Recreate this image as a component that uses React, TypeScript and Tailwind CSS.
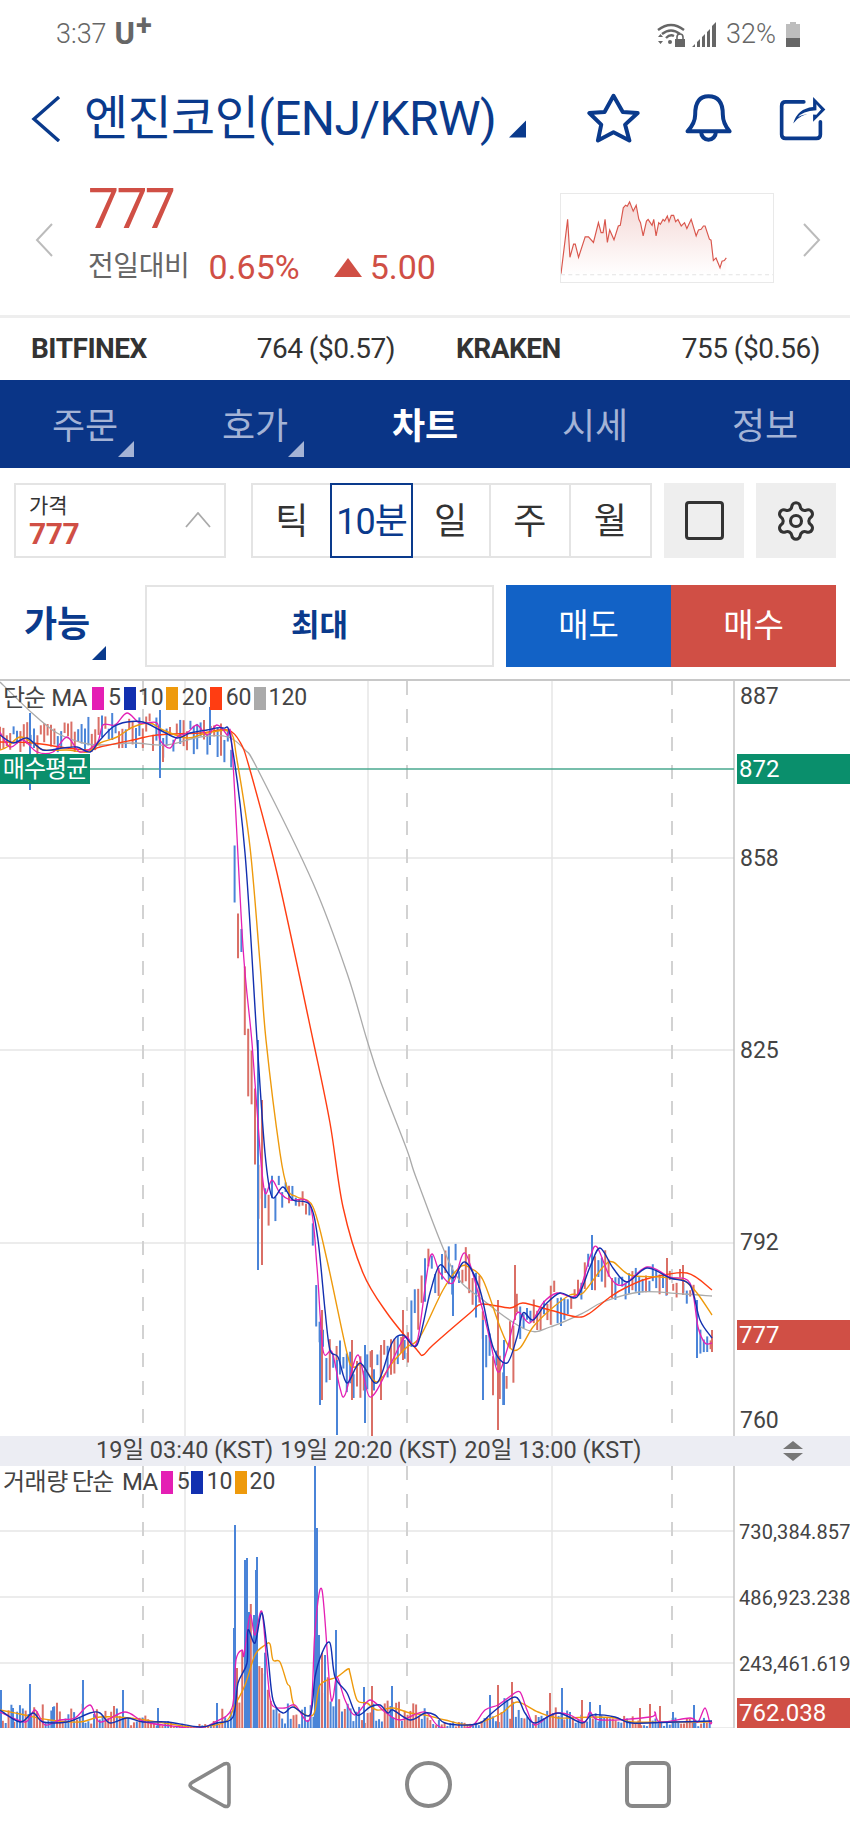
import React from "react";
import { Settings } from "lucide-react";

type P = [number, number];
const NAVY = "#0a3a8c";

function smooth(pts: P[]): string {
  let d = `M${pts[0][0]},${pts[0][1]}`;
  for (let i = 0; i < pts.length - 1; i++) {
    const p0 = pts[Math.max(0, i - 1)];
    const p1 = pts[i];
    const p2 = pts[i + 1];
    const p3 = pts[Math.min(pts.length - 1, i + 2)];
    const k = 0.16;
    d += ` C${(p1[0] + (p2[0] - p0[0]) * k).toFixed(1)},${(p1[1] + (p2[1] - p0[1]) * k).toFixed(1)} ${(p2[0] - (p3[0] - p1[0]) * k).toFixed(1)},${(p2[1] - (p3[1] - p1[1]) * k).toFixed(1)} ${p2[0]},${p2[1]}`;
  }
  return d;
}

function rng(seed: number) {
  let s = seed;
  return () => {
    s = (s * 1664525 + 1013904223) % 4294967296;
    return s / 4294967296;
  };
}

function lerp(t: number[][], x: number, c: number) {
  for (let i = 0; i < t.length - 1; i++) {
    if (x >= t[i][0] && x <= t[i + 1][0]) {
      const f = (x - t[i][0]) / (t[i + 1][0] - t[i][0] || 1);
      return t[i][c] + (t[i + 1][c] - t[i][c]) * f;
    }
  }
  return t[t.length - 1][c];
}

const MA120: P[] = [[0,682],[32,713],[57,733],[83,743],[100,745],[133,743],[167,745],[200,737],[228,737],[245,750],[257,768],[313,883],[347,973],[367,1040],[380,1080],[407,1150],[417,1180],[453,1270],[483,1300],[527,1330],[550,1327],[583,1313],[603,1302],[640,1292],[683,1294],[712,1296]];
const MA60: P[] = [[0,742],[33,743],[67,748],[90,750],[100,747],[133,740],[157,735],[200,733],[227,730],[240,742],[250,770],[277,873],[313,1040],[330,1123],[343,1207],[363,1273],[387,1313],[417,1350],[423,1355],[433,1345],[470,1313],[482,1304],[510,1308],[523,1303],[550,1310],[577,1317],[590,1313],[610,1297],[627,1287],[650,1278],[687,1273],[712,1290]];
const MA20: P[] = [[0,750],[7,747],[20,737],[33,743],[43,750],[67,750],[87,752],[100,743],[117,737],[133,727],[150,723],[163,730],[187,738],[207,733],[230,732],[237,760],[250,847],[260,963],[266,1040],[280,1153],[288,1190],[297,1197],[313,1207],[327,1260],[347,1353],[353,1367],[362,1365],[377,1382],[393,1362],[407,1347],[420,1337],[443,1290],[460,1267],[470,1268],[483,1280],[500,1327],[510,1348],[520,1348],[533,1327],[550,1310],[570,1295],[583,1293],[603,1267],[613,1262],[630,1275],[660,1277],[683,1280],[697,1293],[712,1315]];
const MA10: P[] = [[0,735],[13,743],[27,738],[43,750],[63,748],[77,747],[90,752],[100,740],[113,727],[127,722],[143,722],[160,730],[177,738],[190,733],[207,730],[223,728],[231,740],[245,853],[257,1040],[265,1153],[272,1197],[283,1187],[293,1200],[310,1205],[318,1240],[325,1310],[330,1350],[338,1357],[347,1383],[360,1363],[377,1383],[392,1343],[403,1335],[417,1345],[430,1293],[440,1265],[453,1278],[465,1262],[480,1290],[493,1347],[507,1363],[517,1337],[523,1313],[533,1320],[545,1305],[560,1293],[577,1297],[590,1267],[600,1248],[613,1268],[627,1282],[647,1268],[670,1278],[690,1285],[700,1320],[712,1338]];
const MA5: P[] = [[0,732],[10,747],[23,740],[37,752],[53,752],[67,737],[80,752],[97,743],[103,725],[115,725],[127,713],[140,723],[157,723],[160,740],[170,748],[177,737],[187,733],[197,725],[207,735],[217,725],[227,735],[232,747],[243,947],[252,1043],[260,1150],[265,1193],[272,1180],[280,1193],[290,1200],[310,1205],[317,1267],[323,1350],[332,1352],[340,1388],[345,1395],[358,1355],[370,1397],[390,1365],[405,1337],[417,1342],[430,1257],[440,1273],[453,1283],[465,1253],[480,1300],[490,1340],[498,1372],[507,1350],[517,1313],[530,1323],[543,1303],[557,1293],[577,1295],[590,1257],[597,1247],[610,1277],[623,1285],[647,1267],[670,1277],[690,1283],[698,1327],[705,1343],[712,1343]];

const ENV = [[0,722,755],[30,722,755],[60,722,752],[90,716,752],[120,710,748],[150,713,748],[160,716,758],[190,720,755],[215,716,755],[232,725,768],[234,800,880],[236,860,955],[242,880,965],[246,1000,1095],[252,1020,1105],[256,1090,1205],[260,1150,1228],[265,1165,1228],[280,1175,1218],[295,1188,1212],[312,1192,1216],[314,1230,1310],[318,1310,1388],[330,1328,1380],[345,1342,1398],[360,1342,1398],[375,1342,1390],[390,1308,1375],[405,1318,1370],[415,1282,1345],[425,1235,1305],[440,1248,1295],[455,1238,1295],[470,1243,1295],[482,1272,1340],[492,1328,1405],[505,1358,1405],[513,1298,1385],[520,1288,1345],[535,1292,1330],[555,1278,1330],[570,1288,1320],[590,1248,1295],[605,1243,1295],[620,1278,1302],[635,1263,1295],[660,1263,1295],[680,1268,1298],[692,1278,1308],[698,1300,1355],[704,1325,1352],[712,1325,1352]];
const BLUE = "#4a84d8";
const RED = "#da6f66";
const OUT: [number, number, number, string][] = [[30,713,790,BLUE],[160,710,778,BLUE],[163,745,762,RED],[210,707,745,BLUE],[258,1040,1270,BLUE],[262,1100,1265,RED],[320,1330,1405,BLUE],[322,1310,1400,RED],[337,1360,1435,BLUE],[352,1340,1400,RED],[365,1345,1423,BLUE],[372,1350,1436,RED],[381,1345,1400,RED],[403,1310,1360,RED],[453,1270,1316,BLUE],[498,1300,1430,RED],[504,1340,1405,BLUE],[483,1320,1400,BLUE],[515,1265,1320,RED],[592,1235,1290,BLUE],[667,1258,1295,RED],[683,1265,1295,RED],[697,1300,1358,BLUE],[712,1330,1352,RED]];

const candleBars = (() => {
  const r = rng(17);
  const out: [number, number, number, string][] = [];
  for (let x = 0; x <= 712; x += 3.4) {
    const t = lerp(ENV, x, 1);
    const b = lerp(ENV, x, 2);
    const h = b - t;
    const a = t + r() * h * 0.6;
    const c = Math.min(b, a + h * (0.2 + r() * 0.6));
    out.push([x, a, c, r() > 0.52 ? BLUE : RED]);
  }
  return out.concat(OUT);
})();

const VENV = [[0,28],[100,28],[140,14],[180,5],[205,5],[220,15],[232,40],[236,100],[250,130],[262,100],[270,60],[280,30],[300,25],[312,30],[316,100],[325,80],[335,80],[345,45],[355,30],[380,30],[420,25],[440,8],[470,5],[485,25],[500,35],[515,30],[530,15],[560,25],[580,15],[600,15],[640,12],[712,10]];
const VOUT: [number, number, string][] = [[1,1690,BLUE],[13,1708,BLUE],[30,1684,BLUE],[53,1707,BLUE],[83,1680,BLUE],[123,1690,BLUE],[114,1706,RED],[158,1708,BLUE],[217,1703,BLUE],[234,1628,BLUE],[235,1525,BLUE],[237,1668,RED],[245,1560,BLUE],[247,1558,BLUE],[249,1612,BLUE],[256,1570,BLUE],[257,1557,BLUE],[254,1615,BLUE],[262,1668,RED],[315,1465,BLUE],[317,1528,BLUE],[319,1635,BLUE],[322,1653,RED],[325,1655,BLUE],[336,1630,BLUE],[364,1687,BLUE],[372,1686,RED],[392,1686,BLUE],[490,1695,BLUE],[498,1685,RED],[512,1682,RED],[550,1693,RED],[562,1688,BLUE],[582,1700,RED],[590,1702,BLUE],[600,1705,BLUE],[650,1704,RED],[640,1708,RED],[660,1706,RED],[673,1712,BLUE],[694,1705,BLUE]];
const volBars = (() => {
  const r = rng(91);
  const out: [number, number, string][] = [];
  for (let x = 0; x <= 712; x += 2.85) {
    out.push([x, 1728 - lerp(VENV, x, 1) * (0.15 + r() * 0.85), r() > 0.5 ? BLUE : RED]);
  }
  return out.concat(VOUT);
})();

const VO: P[] = [[0,1710],[20,1714],[50,1720],[80,1722],[100,1717],[130,1718],[170,1724],[195,1727],[225,1722],[235,1705],[245,1685],[255,1655],[265,1645],[270,1644],[273,1660],[280,1662],[287,1683],[290,1687],[295,1707],[313,1715],[320,1685],[337,1677],[348,1669],[350,1673],[357,1700],[367,1703],[377,1710],[393,1708],[410,1713],[425,1715],[445,1720],[468,1725],[482,1722],[502,1713],[517,1702],[538,1712],[558,1718],[592,1717],[615,1718],[632,1722],[675,1722],[712,1722]];
const VN: P[] = [[0,1710],[20,1722],[33,1713],[43,1722],[67,1722],[90,1713],[100,1713],[110,1723],[127,1718],[143,1722],[167,1722],[200,1727],[217,1723],[233,1717],[238,1683],[247,1663],[248,1630],[255,1643],[262,1613],[268,1657],[273,1700],[283,1713],[293,1707],[310,1715],[315,1677],[322,1653],[330,1643],[335,1677],[347,1693],[357,1715],[370,1707],[380,1705],[388,1713],[393,1710],[410,1720],[425,1713],[435,1715],[445,1723],[468,1725],[482,1722],[492,1713],[515,1697],[525,1713],[535,1723],[558,1713],[582,1723],[592,1715],[615,1717],[632,1723],[675,1722],[712,1721]];
const VM: P[] = [[0,1712],[25,1722],[35,1710],[45,1725],[60,1720],[75,1718],[90,1705],[100,1722],[125,1712],[145,1722],[180,1727],[200,1728],[215,1722],[232,1708],[236,1660],[242,1650],[244,1655],[250,1615],[255,1635],[262,1612],[268,1680],[272,1705],[285,1708],[295,1705],[310,1718],[315,1630],[322,1590],[330,1690],[333,1698],[337,1677],[345,1700],[355,1715],[370,1700],[385,1712],[400,1720],[425,1712],[440,1727],[470,1727],[485,1710],[498,1705],[512,1695],[520,1692],[527,1710],[535,1725],[550,1715],[560,1713],[570,1715],[585,1722],[590,1712],[600,1720],[650,1717],[655,1712],[660,1722],[690,1718],[698,1722],[705,1708],[710,1723],[712,1722]];

const MINI: P[] = [[57,255],[77,90],[84,205],[95,165],[100,165],[110,205],[130,143],[140,143],[155,160],[170,100],[178,130],[184,130],[190,90],[197,160],[204,122],[217,152],[230,110],[236,108],[245,55],[252,47],[257,50],[264,37],[275,65],[284,47],[292,90],[297,100],[305,140],[315,95],[320,90],[332,108],[337,90],[344,140],[352,100],[357,105],[365,90],[370,95],[378,80],[383,97],[390,78],[397,78],[403,97],[410,90],[420,110],[430,100],[437,118],[450,90],[465,140],[472,122],[480,120],[487,110],[492,110],[505,150],[510,153],[517,215],[525,207],[537,237],[543,217],[550,215],[556,207]];

function Corner({ className }: { className: string }) {
  return (
    <svg viewBox="0 0 16 16" className={className}>
      <path d="M16 0V16H0Z" fill="currentColor" />
    </svg>
  );
}

function Swatch({ className }: { className: string }) {
  return <span className={`block w-[12px] h-[23px] ${className}`} />;
}

function Grid({ y0, y1, ys }: { y0: number; y1: number; ys: number[] }) {
  return (
    <g>
      {ys.map((y) => (
        <line key={y} x1={0} x2={734} y1={y} y2={y} stroke="#e6e6e6" strokeWidth={1.5} />
      ))}
      {[185, 368, 552].map((x) => (
        <line key={x} x1={x} x2={x} y1={y0} y2={y1} stroke="#e6e6e6" strokeWidth={1.5} />
      ))}
      {[143, 407, 672].map((x) => (
        <line key={x} x1={x} x2={x} y1={y0} y2={y1} stroke="#d2d2d2" strokeWidth={2} strokeDasharray="14 14" />
      ))}
    </g>
  );
}

function AxisLabel({ y, children }: { y: number; children: React.ReactNode }) {
  return (
    <span style={{ top: y - 681 - 14 }} className="absolute left-[740px] h-[30px] leading-[30px] text-[23px] text-[#444]">
      {children}
    </span>
  );
}

function VolLabel({ y, children }: { y: number; children: React.ReactNode }) {
  return (
    <span style={{ top: y - 1466 - 14 }} className="absolute left-[739px] h-[30px] leading-[30px] text-[20px] tracking-[0.1px] text-[#444]">
      {children}
    </span>
  );
}

export default function App() {
  return (
    <div className="w-[850px] h-[1842px] bg-white overflow-hidden flex flex-col font-[Roboto,'Noto_Sans_CJK_KR',sans-serif]">
      {/* status bar */}
      <div className="h-[66px] flex items-center justify-between pl-[56px] pr-[50px] pt-[2px] text-[#666]">
        <div className="flex items-start">
          <span className="text-[27px] leading-[30px] font-light">3:37</span>
          <span className="text-[31px] leading-[30px] font-bold ml-[8px]">U</span>
          <span className="text-[29px] leading-[20px] font-bold ml-[1px] -mt-[4px]">+</span>
        </div>
        <div className="flex items-center">
          <svg viewBox="0 0 30 25" className="w-[30px] h-[25px]">
            <path d="M2 8Q15 -2 28 8M6 12Q15 5 24 12M10 16Q14 12 18 14" fill="none" stroke="#666" strokeWidth="2.4" />
            <circle cx="14" cy="20" r="2" fill="#666" />
            <path d="M2 15l2.500-3 2.500 3zM2 19h5l-2.500 3z" fill="#666" />
            <rect x="19" y="17" width="10" height="8" fill="#666" />
            <path d="M21 17v-2a3 3 0 016 0v2" fill="none" stroke="#666" strokeWidth="1.600" />
          </svg>
          <svg viewBox="0 0 26 25" className="w-[26px] h-[25px] ml-[6px]">
            <path d="M0 25h3v-3l-3 3zM5 25h3v-8l-3 3zM10 25h3v-13l-3 3zM15 25h3v-18l-3 3zM20 25h4V0l-4 4z" fill="#666" />
          </svg>
          <span className="text-[27px] leading-[30px] font-light ml-[8px]">32%</span>
          <svg viewBox="0 0 14 25" className="w-[14px] h-[25px] ml-[10px]">
            <path d="M4 0h6v2h4v23H0V2h4z" fill="#bdbdbd" />
            <rect x="0" y="16" width="14" height="9" fill="#666" />
          </svg>
        </div>
      </div>

      {/* title */}
      <div className="h-[94px] flex items-start pl-[31px] pt-[29px]">
        <svg viewBox="0 0 30 46" className="w-[30px] h-[46px] mt-[1px]">
          <path d="M28 1L3 23L28 45" fill="none" stroke={NAVY} strokeWidth="3.400" />
        </svg>
        <span className="ml-[23px] text-[48px] leading-[48px] text-[#0a3a8c] tracking-[-0.6px] whitespace-nowrap">엔진코인(ENJ/KRW)</span>
        <Corner className="w-[17px] h-[18px] ml-[13px] mt-[25px] text-[#0a3a8c]" />
        <svg viewBox="50 40 160 150" className="w-[53px] h-[50px] ml-[61px] -mt-[2px]">
          <path d="M130 48L158 97L203 100L165 135L178 183L130 158L83 183L93 135L57 100L103 97Z" fill="none" stroke={NAVY} strokeWidth="12" strokeLinejoin="round" />
        </svg>
        <svg viewBox="345 40 140 150" className="w-[47px] h-[50px] ml-[45px] -mt-[2px]">
          <path d="M352 155Q375 130 375 105Q375 50 415 50Q458 50 458 105Q458 130 478 155Z" fill="none" stroke={NAVY} strokeWidth="12" strokeLinejoin="round" />
          <path d="M393 158A22 22 0 0 0 437 158" fill="none" stroke={NAVY} strokeWidth="12" />
        </svg>
        <svg viewBox="625 42 145 140" className="w-[48px] h-[47px] ml-[47px] -mt-[1px]">
          <path d="M700 65H645Q633 65 633 77V163Q633 175 645 175H738Q750 175 750 163V125" fill="none" stroke={NAVY} strokeWidth="11" strokeLinecap="round" />
          <path d="M668 130Q680 85 728 80V50L765 88L728 125V100Q690 100 668 130Z" fill={NAVY} />
          <path d="M682 112Q695 92 738 90V72L752 88L738 104Q700 98 682 112Z" fill="#fff" />
        </svg>
      </div>

      {/* price */}
      <div className="h-[155px] flex items-start pl-[35px]">
        <svg viewBox="0 0 18 34" className="w-[18px] h-[34px] mt-[63px]">
          <path d="M17 1L2 17L17 33" fill="none" stroke="#bbbbbb" strokeWidth="2" />
        </svg>
        <div className="ml-[35px] flex flex-col w-[300px]">
          <span className="text-[55px] leading-[60px] text-[#d04f45] mt-[19px] tracking-[-2.5px]">777</span>
          <div className="flex items-center mt-[8px] whitespace-nowrap">
            <span className="text-[28px] leading-[40px] text-[#666] tracking-[-0.4px]">전일대비</span>
            <span className="text-[34px] leading-[40px] text-[#d04f45] ml-[19px]">0.65%</span>
            <span className="block w-0 h-0 ml-[34px] border-x-[14px] border-x-transparent border-b-[19px] border-b-[#d04f45]" />
            <span className="text-[34px] leading-[40px] text-[#d04f45] ml-[8px]">5.00</span>
          </div>
        </div>
        <div className="ml-[172px] mt-[33px] w-[214px] h-[90px] border border-[#e9e9e9]">
          <svg viewBox="57 13 640 267" preserveAspectRatio="none" className="w-full h-full block">
            <defs>
              <linearGradient id="mini" x1="0" y1="0" x2="0" y2="1">
                <stop offset="0" stopColor="#d04f45" stopOpacity="0.22" />
                <stop offset="1" stopColor="#d04f45" stopOpacity="0" />
              </linearGradient>
            </defs>
            <polygon points={`57,258 ${MINI.map((p) => p.join(",")).join(" ")} 556,258`} fill="url(#mini)" />
            <polyline points={MINI.map((p) => p.join(",")).join(" ")} fill="none" stroke="#d9564c" strokeWidth="3.500" />
            <line x1="57" x2="697" y1="258" y2="258" stroke="#dddddd" strokeWidth="2.500" strokeDasharray="12 10" />
          </svg>
        </div>
        <svg viewBox="0 0 18 34" className="w-[18px] h-[34px] mt-[63px] ml-[29px]">
          <path d="M1 1L16 17L1 33" fill="none" stroke="#bbbbbb" strokeWidth="2" />
        </svg>
      </div>

      {/* exchange */}
      <div className="h-[65px] border-t-[3px] border-[#eeeeee] flex items-center pl-[31px] pr-[30px] text-[28px] text-[#333] tracking-[-0.5px] whitespace-nowrap">
        <div className="w-[364px] flex justify-between">
          <span className="font-bold">BITFINEX</span>
          <span>764 ($0.57)</span>
        </div>
        <div className="w-[364px] ml-[61px] flex justify-between">
          <span className="font-bold">KRAKEN</span>
          <span>755 ($0.56)</span>
        </div>
      </div>

      {/* tabs */}
      <div className="h-[88px] bg-[#0a3587] grid grid-cols-5 text-[36px] text-[#a4b3d6]">
        {["주문", "호가", "차트", "시세", "정보"].map((t, i) => (
          <div key={t} className="relative flex items-center justify-center pt-[5px]">
            <span className={i === 2 ? "font-bold text-white" : ""}>{t}</span>
            {i < 2 && <Corner className="absolute left-[118px] top-[61px] w-[16px] h-[16px] text-[#a4b3d6]" />}
          </div>
        ))}
      </div>

      {/* controls */}
      <div className="flex pl-[14px] pr-[14px] pt-[15px] h-[90px]">
        <div className="w-[212px] h-[75px] border-2 border-[#e4e4e4] flex items-center justify-between pl-[13px] pr-[13px]">
          <div className="flex flex-col">
            <span className="text-[21px] leading-[26px] text-[#333]">가격</span>
            <span className="text-[30px] leading-[30px] font-bold text-[#d04f45] tracking-[-0.5px]">777</span>
          </div>
          <svg viewBox="0 0 26 16" className="w-[26px] h-[16px] mb-[2px]">
            <path d="M1 15L13 1L25 15" fill="none" stroke="#aaaaaa" strokeWidth="1.800" />
          </svg>
        </div>
        <div className="ml-[25px] w-[401px] h-[75px] grid grid-cols-5 border-2 border-[#e4e4e4] text-[36px] text-[#333]">
          <div className="flex items-center justify-center pt-[3px] border-r-2 border-[#e4e4e4]">틱</div>
          <div className="flex items-center justify-center pt-[3px] -my-[2px] -ml-[2px] -mr-[1px] border-2 border-[#0a3a8c] text-[#0a3a8c] tracking-[-1px] whitespace-nowrap">10분</div>
          <div className="flex items-center justify-center pt-[3px] border-r-2 border-[#e4e4e4]">일</div>
          <div className="flex items-center justify-center pt-[3px] border-r-2 border-[#e4e4e4]">주</div>
          <div className="flex items-center justify-center pt-[3px]">월</div>
        </div>
        <div className="ml-[12px] w-[80px] h-[75px] bg-[#eeeeee] flex items-center justify-center">
          <span className="block w-[39px] h-[39px] border-[3px] border-[#333] rounded-[4px]" />
        </div>
        <div className="ml-[12px] w-[80px] h-[75px] bg-[#eeeeee] flex items-center justify-center">
          <Settings size={44} strokeWidth={1.7} color="#333" />
        </div>
      </div>
      <div className="flex items-start pl-[14px] pr-[14px] pt-[27px] h-[121px]">
        <div className="relative w-[131px] h-[82px]">
          <span className="absolute left-[10px] top-[18px] text-[36px] leading-[44px] font-semibold text-[#0a3a8c]">가능</span>
          <Corner className="absolute left-[78px] bottom-[7px] w-[14px] h-[14px] text-[#0a3a8c]" />
        </div>
        <div className="w-[349px] h-[82px] border-2 border-[#e4e4e4] flex items-center justify-center text-[31px] font-bold text-[#0a3a8c]">최대</div>
        <div className="ml-[12px] w-[165px] h-[82px] bg-[#1262c6] flex items-center justify-center text-[33px] text-white">매도</div>
        <div className="w-[165px] h-[82px] bg-[#d04f45] flex items-center justify-center text-[33px] text-white">매수</div>
      </div>

      {/* price chart */}
      <div className="relative h-[757px] border-t-2 border-[#c8c8c8] shrink-0">
        <svg viewBox="0 681 850 755" className="absolute inset-0 w-[850px] h-[755px]">
          <Grid y0={681} y1={1436} ys={[858, 1050, 1243]} />
          <line x1={734} x2={734} y1={681} y2={1436} stroke="#c4c4c4" strokeWidth={1.5} />
          <line x1={0} x2={734} y1={769} y2={769} stroke="#4aa88f" strokeWidth={1.5} />
          {candleBars.map((b, i) => (
            <line key={i} x1={b[0]} x2={b[0]} y1={b[1]} y2={b[2]} stroke={b[3]} strokeWidth={2} />
          ))}
          <path d={smooth(MA120)} fill="none" stroke="#aaaaaa" strokeWidth={1.300} />
          <path d={smooth(MA60)} fill="none" stroke="#ff3d12" strokeWidth={1.400} />
          <path d={smooth(MA20)} fill="none" stroke="#ee9a0c" strokeWidth={1.400} />
          <path d={smooth(MA5)} fill="none" stroke="#e41fb4" strokeWidth={1.300} />
          <path d={smooth(MA10)} fill="none" stroke="#1230b0" strokeWidth={1.400} />
        </svg>
        <div className="absolute left-[3px] top-[5px] flex items-center h-[24px] text-[23px] text-[#444] whitespace-nowrap">
          <span className="text-[24px] tracking-[-1px]">단순</span>
          <span className="text-[24px] ml-[6px] tracking-[-0.5px]">MA</span>
          <Swatch className="ml-[5px] bg-[#e41fb4]" />
          <span className="ml-[4px]">5</span>
          <Swatch className="ml-[3px] bg-[#1230b0]" />
          <span className="ml-[2px]">10</span>
          <Swatch className="ml-[2px] bg-[#ee9a0c]" />
          <span className="ml-[4px]">20</span>
          <Swatch className="ml-[2px] bg-[#ff3d12]" />
          <span className="ml-[4px]">60</span>
          <Swatch className="ml-[2px] bg-[#aaaaaa]" />
          <span className="ml-[3px]">120</span>
        </div>
        <div className="absolute left-0 top-[73px] w-[90px] h-[30px] bg-[#0a8f6c] text-white text-[24px] leading-[30px] text-center tracking-[-1px] whitespace-nowrap">매수평균</div>
        <div className="absolute left-[737px] top-[73px] w-[113px] h-[30px] bg-[#0a8f6c] text-white text-[24px] leading-[30px] pl-[2px]">872</div>
        <div className="absolute left-[737px] top-[639px] w-[113px] h-[30px] bg-[#d04f45] text-white text-[24px] leading-[30px] pl-[2px]">777</div>
        <AxisLabel y={696}>887</AxisLabel>
        <AxisLabel y={858}>858</AxisLabel>
        <AxisLabel y={1050}>825</AxisLabel>
        <AxisLabel y={1242}>792</AxisLabel>
        <AxisLabel y={1420}>760</AxisLabel>
      </div>

      {/* time strip */}
      <div className="relative h-[30px] shrink-0 bg-[#ecedf3] flex items-center pl-[96px] gap-[7px] text-[23.5px] text-[#444] whitespace-nowrap">
        <span>19일 03:40 (KST)</span>
        <span>19일 20:20 (KST)</span>
        <span>20일 13:00 (KST)</span>
        <svg viewBox="0 0 22 22" className="absolute left-[782px] top-[4px] w-[22px] h-[22px]">
          <path d="M11 1L21 9H1ZM11 21L21 13H1Z" fill="#777" />
        </svg>
      </div>

      {/* volume */}
      <div className="relative h-[262px] shrink-0">
        <svg viewBox="0 1466 850 262" className="absolute inset-0 w-[850px] h-[262px]">
          <Grid y0={1466} y1={1728} ys={[1531, 1597, 1663]} />
          <line x1={0} x2={734} y1={1728} y2={1728} stroke="#e6e6e6" strokeWidth={1.5} />
          <line x1={734} x2={734} y1={1466} y2={1728} stroke="#c4c4c4" strokeWidth={1.5} />
          {volBars.map((b, i) => (
            <line key={i} x1={b[0]} x2={b[0]} y1={b[1]} y2={1728} stroke={b[2]} strokeWidth={2} />
          ))}
          <path d={smooth(VO)} fill="none" stroke="#ee9a0c" strokeWidth={1.400} />
          <path d={smooth(VM)} fill="none" stroke="#e41fb4" strokeWidth={1.300} />
          <path d={smooth(VN)} fill="none" stroke="#1230b0" strokeWidth={1.400} />
        </svg>
        <div className="absolute left-[3px] top-[4px] flex items-center h-[24px] text-[23px] text-[#444] whitespace-nowrap">
          <span className="text-[24px] tracking-[-0.5px]">거래량</span>
          <span className="text-[24px] ml-[4px] tracking-[-1.5px]">단순</span>
          <span className="text-[24px] ml-[9px] tracking-[-0.5px]">MA</span>
          <Swatch className="ml-[3px] bg-[#e41fb4]" />
          <span className="ml-[4px]">5</span>
          <Swatch className="ml-[1px] bg-[#1230b0]" />
          <span className="ml-[4px]">10</span>
          <Swatch className="ml-[2px] bg-[#ee9a0c]" />
          <span className="ml-[3px]">20</span>
        </div>
        <VolLabel y={1531}>730,384.857</VolLabel>
        <VolLabel y={1597}>486,923.238</VolLabel>
        <VolLabel y={1663}>243,461.619</VolLabel>
        <div className="absolute left-[737px] top-[232px] w-[113px] h-[30px] bg-[#d04f45] text-white text-[24px] leading-[30px] pl-[2px]">762.038</div>
      </div>

      {/* android nav */}
      <div className="flex-1 flex items-start pt-[33px] pl-[188px]">
        <svg viewBox="0 0 44 48" className="w-[44px] h-[48px]">
          <path d="M4 21.500L36 3Q41 1 41 6V42Q41 47 36 45L4 27Q0 24 4 21.500Z" fill="none" stroke="#888" strokeWidth="3.600" strokeLinejoin="round" />
        </svg>
        <span className="block ml-[173px] w-[47px] h-[47px] rounded-full border-[4px] border-[#888]" />
        <span className="block ml-[173px] w-[46px] h-[47px] rounded-[7px] border-[4px] border-[#888]" />
      </div>
    </div>
  );
}
